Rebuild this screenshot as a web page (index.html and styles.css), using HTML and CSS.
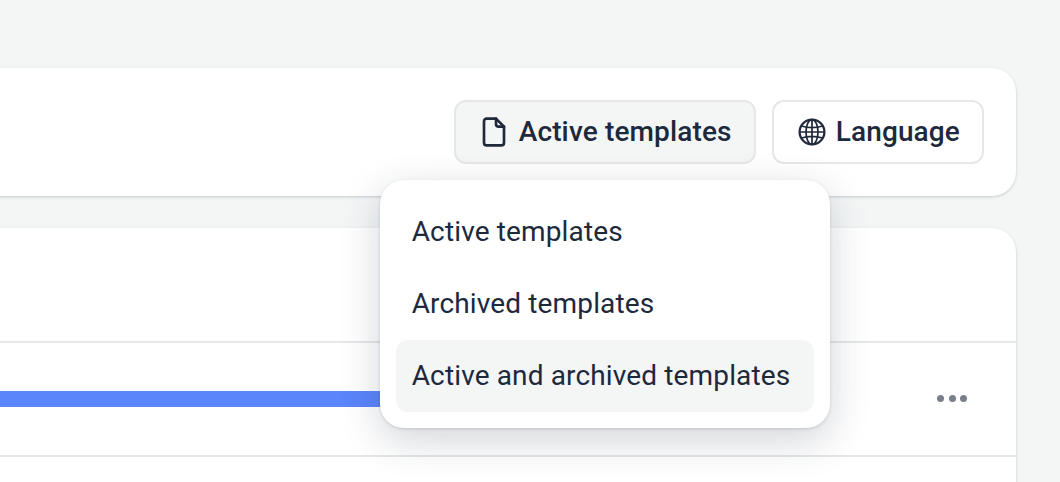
FILE: index.html
```html
<!DOCTYPE html>
<html lang="en">
<head>
  <meta charset="UTF-8" />
  <title>Templates</title>
  <link rel="stylesheet" href="styles.css">
</head>
<body>
  <main class="page">
    <header class="toolbar">
      <div class="dropdown">
        <button class="btn btn-active">
          <svg class="icon" viewBox="0 0 24 24" fill="none" stroke="currentColor" stroke-width="2" stroke-linecap="round" stroke-linejoin="round">
            <path d="M13.500 2H6.500A2 2 0 0 0 4.500 4v16a2 2 0 0 0 2 2h11a2 2 0 0 0 2-2V8z"/>
            <path d="M13.500 2v4a2 2 0 0 0 2 2h4"/>
          </svg>
          Active templates
        </button>
        <ul class="menu">
          <li class="menu-item">Active templates</li>
          <li class="menu-item">Archived templates</li>
          <li class="menu-item selected">Active and archived templates</li>
        </ul>
      </div>
      <button class="btn">
        <svg class="icon" viewBox="0 0 24 24" fill="none" stroke="currentColor" stroke-width="1.300">
          <circle cx="12" cy="12" r="9.300" stroke-width="1.700"/>
          <ellipse cx="12" cy="12" rx="4.500" ry="9.300"/>
          <path d="M12 2.700v18.600M2.700 12h18.600M4 7.500c4.500 1.300 11.500 1.300 16 0M4 16.500c4.500-1.300 11.500-1.300 16 0"/>
        </svg>
        Language
      </button>
    </header>

    <section class="card">
      <div class="row row-head"></div>
      <div class="row row-bar">
        <div class="bar"></div>
        <div class="dots"><i></i><i></i><i></i></div>
      </div>
      <div class="row"></div>
    </section>
  </main>
</body>
</html>
```

FILE: styles.css
```css
:root {
  --ink: #20293c;
  --line: #e6e7ea;
  --soft: #f4f6f6;
}

* {
  box-sizing: border-box;
}

html, body {
  height: 100%;
}

body {
  margin: 0;
  overflow: hidden;
  background: var(--soft);
  color: var(--ink);
  font-family: Roboto, sans-serif;
  letter-spacing: 0.14px;
}

.page {
  display: flex;
  flex-direction: column;
  gap: 32px;
  height: 482px;
  margin-left: -40px;
  padding: 68px 44px 0 0;
}

.toolbar, .card {
  background: #fff;
  border-radius: 24px;
  box-shadow: 0 1px 3px rgba(32, 41, 60, 0.22);
}

.toolbar {
  display: flex;
  flex: none;
  justify-content: flex-end;
  gap: 16px;
  height: 128px;
  padding: 32px;
}

.dropdown {
  position: relative;
}

.btn {
  display: flex;
  align-items: center;
  gap: 8px;
  height: 64px;
  padding: 0 22px 2px;
  background: #fff;
  border: 2px solid var(--line);
  border-radius: 12px;
  color: var(--ink);
  font-family: inherit;
  font-size: 28px;
  font-weight: 500;
  letter-spacing: inherit;
}

.btn-active {
  gap: 9px;
  background: var(--soft);
}

.icon {
  width: 32px;
  height: 32px;
  margin-bottom: -2px;
}

.menu {
  position: absolute;
  z-index: 2;
  top: 80px;
  left: -74px;
  width: 450px;
  margin: 0;
  padding: 16px;
  list-style: none;
  background: #fff;
  border-radius: 24px;
  box-shadow: 0 1px 3px rgba(32, 41, 60, 0.16), 0 12px 40px rgba(32, 41, 60, 0.2);
}

.menu-item {
  display: flex;
  align-items: center;
  height: 72px;
  padding: 0 16px 2px;
  border-radius: 12px;
  font-size: 28px;
}

.selected {
  background: var(--soft);
}

.card {
  flex: 1;
  margin-bottom: -40px;
  overflow: hidden;
}

.row {
  height: 114px;
  border-bottom: 2px solid var(--line);
}

.row-head {
  height: 115px;
}

.row-bar {
  display: flex;
  align-items: center;
  justify-content: space-between;
  padding: 0 49px 0 0;
}

.bar {
  width: 500px;
  height: 16px;
  background: #5b85fb;
}

.dots {
  display: flex;
  gap: 4.5px;
  margin-top: -2px;
}

.dots i {
  width: 7px;
  height: 7px;
  border-radius: 50%;
  background: #7a7f8c;
}
```
